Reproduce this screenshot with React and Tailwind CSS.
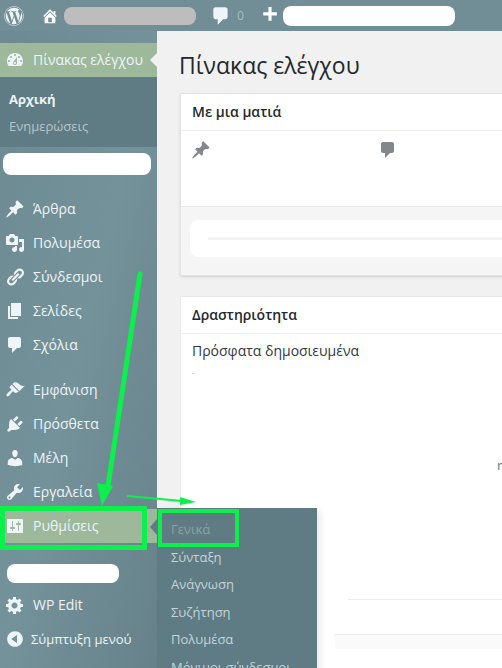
import { FaWordpress } from 'react-icons/fa';

const icons = {
  dashboard: 'M3.76 16h12.48c1.1-1.37 1.76-3.11 1.76-5 0-4.42-3.58-8-8-8s-8 3.58-8 8c0 1.89.66 3.63 1.76 5zM10 4c.55 0 1 .45 1 1s-.45 1-1 1-1-.45-1-1 .45-1 1-1zM6 6c.55 0 1 .45 1 1s-.45 1-1 1-1-.45-1-1 .45-1 1-1zm8 0c.55 0 1 .45 1 1s-.45 1-1 1-1-.45-1-1 .45-1 1-1zm-5.37 5.55L12 7v6c0 1.1-.9 2-2 2s-2-.9-2-2c0-.57.24-1.08.63-1.45zM4 10c.55 0 1 .45 1 1s-.45 1-1 1-1-.45-1-1 .45-1 1-1zm12 0c.55 0 1 .45 1 1s-.45 1-1 1-1-.45-1-1 .45-1 1-1zm-5 3c0-.55-.45-1-1-1s-1 .45-1 1 .45 1 1 1 1-.45 1-1z',
  post: 'M10.44 3.02l1.82-1.82 6.36 6.35-1.83 1.82c-1.05-.68-2.48-.57-3.41.36l-.75.75c-.92.93-1.04 2.35-.35 3.41l-1.83 1.82-2.41-2.41-2.8 2.79c-.42.42-3.38 2.71-3.8 2.29s1.86-3.39 2.28-3.81l2.79-2.79L4.1 9.36l1.83-1.82c1.05.69 2.48.57 3.4-.36l.75-.75c.93-.92 1.05-2.35.36-3.41z',
  media: 'M13 11V4c0-.55-.45-1-1-1h-1.67L9 1H5L3.67 3H2c-.55 0-1 .45-1 1v7c0 .55.45 1 1 1h10c.55 0 1-.45 1-1zM7 4.5c1.38 0 2.5 1.12 2.5 2.5S8.38 9.5 7 9.5 4.5 8.38 4.5 7 5.62 4.5 7 4.5zM14 6h5v10.5c0 1.38-1.12 2.5-2.5 2.5S14 17.88 14 16.5s1.12-2.5 2.5-2.5c.17 0 .34.02.5.05V9h-3V6zm-4 8.05V13h2v3.5c0 1.38-1.12 2.5-2.5 2.5S7 17.88 7 16.5 8.12 14 9.5 14c.17 0 .34.02.5.05z',
  links: 'M17.74 2.76c1.68 1.69 1.68 4.41 0 6.1l-1.53 1.52c-1.12 1.12-2.7 1.47-4.14 1.09l2.62-2.61.76-.77.76-.76c.84-.84.84-2.2 0-3.04-.84-.85-2.2-.85-3.04 0l-.77.76-3.38 3.38c-.37-1.44-.02-3.02 1.1-4.14l1.52-1.53c1.69-1.68 4.42-1.68 6.1 0zM8.59 13.43l5.34-5.34c.42-.42.42-1.1 0-1.52-.44-.43-1.13-.39-1.53 0l-5.33 5.34c-.42.42-.42 1.1 0 1.52.44.43 1.13.39 1.52 0zm-.76 2.29l4.14-4.15c.38 1.44.03 3.02-1.09 4.14l-1.52 1.53c-1.69 1.68-4.41 1.68-6.1 0-1.68-1.68-1.68-4.42 0-6.1l1.53-1.52c1.12-1.12 2.7-1.47 4.14-1.1l-4.14 4.15c-.85.84-.85 2.2 0 3.05.84.84 2.2.84 3.04 0z',
  page: 'M6 15V2h10v13H6zm-1 1h8v2H3V5h2v11z',
  comments: 'M5 2h9c1.1 0 2 .9 2 2v7c0 1.1-.9 2-2 2h-2l-5 5v-5H5c-1.1 0-2-.9-2-2V4c0-1.1.9-2 2-2z',
  appearance: 'M14.48 11.06L7.41 3.99l1.5-1.5c.5-.56 2.3-.47 3.51.32 1.21.8 1.43 1.28 2.91 2.1 1.18.64 2.45 1.26 4.45.85zM13.77 11.77L6.7 4.7 4.93 6.47c-.39.39-.39 1.02 0 1.41l1.06 1.06c.39.39.39 1.03 0 1.42-.6.6-1.43 1.11-2.21 1.69-.35.26-.7.53-1.01.84-1.03 1.03-1.77 2.63-1.17 3.23.6.6 2.2-.14 3.23-1.17.31-.31.58-.66.84-1.01.58-.78 1.09-1.61 1.69-2.21.39-.39 1.03-.39 1.42 0l1.06 1.06c.39.39 1.02.39 1.41 0z',
  plugins: 'M13.11 4.36L9.87 7.6 8 5.73l3.24-3.24c.35-.34 1.05-.2 1.56.32.52.51.66 1.21.31 1.55zm-8 1.77l.91-1.12 9.01 9.01-1.19.84c-.71.71-2.63 1.16-3.82 1.16H6.14L4.9 17.26c-.59.59-1.54.59-2.12 0-.59-.58-.59-1.53 0-2.12l1.24-1.24v-3.88c0-1.13.4-3.19 1.09-3.89zm7.26 3.97l3.24-3.24c.34-.35 1.04-.21 1.55.31.52.51.66 1.21.31 1.55l-3.24 3.25z',
  users: 'M10 9.25c-2.27 0-2.73-3.44-2.73-3.44C7 4.02 7.82 2 9.97 2c2.16 0 2.98 2.02 2.71 3.81 0 0-.41 3.44-2.68 3.44zm0 2.57L12.72 10c2.39 0 4.52 2.33 4.52 4.53v2.49s-3.65 1.13-7.24 1.13c-3.65 0-7.24-1.13-7.24-1.13v-2.49c0-2.25 1.94-4.48 4.47-4.48z',
  tools: 'M16.68 9.77c-1.34 1.34-3.3 1.67-4.95.99l-5.41 6.52c-.99.99-2.59.99-3.58 0s-.99-2.59 0-3.57l6.52-5.42c-.68-1.65-.35-3.61.99-4.95 1.28-1.28 3.12-1.62 4.72-1.06l-2.89 2.89 2.82 2.82 2.86-2.87c.53 1.58.18 3.39-1.08 4.65zM3.81 16.21c.4.39 1.04.39 1.43 0 .4-.4.4-1.04 0-1.43-.39-.4-1.03-.4-1.43 0-.39.39-.39 1.03 0 1.43z',
  settings: 'M18 16V4c0-.55-.45-1-1-1H3c-.55 0-1 .45-1 1v12c0 .55.45 1 1 1h14c.55 0 1-.45 1-1zM8 11h1c.55 0 1 .45 1 1s-.45 1-1 1H8v1.5c0 .28-.22.5-.5.5s-.5-.22-.5-.5V13H6c-.55 0-1-.45-1-1s.45-1 1-1h1V5.5c0-.28.22-.5.5-.5s.5.22.5.5V11zm5-2h-1c-.55 0-1-.45-1-1s.45-1 1-1h1V5.5c0-.28.22-.5.5-.5s.5.22.5.5V7h1c.55 0 1 .45 1 1s-.45 1-1 1h-1v5.5c0 .28-.22.5-.5.5s-.5-.22-.5-.5V9z',
  generic: 'M18 12h-2.18c-.17.7-.44 1.35-.81 1.93l1.54 1.54-2.1 2.1-1.54-1.54c-.58.36-1.23.63-1.91.79V19H8v-2.18c-.68-.16-1.33-.43-1.91-.79l-1.54 1.54-2.12-2.12 1.54-1.54c-.36-.58-.63-1.23-.79-1.91H1V9.03h2.17c.16-.7.44-1.35.8-1.94L2.43 5.55l2.1-2.1 1.54 1.54c.58-.37 1.24-.64 1.93-.81V2h3v2.18c.68.16 1.33.43 1.91.79l1.54-1.54 2.12 2.12-1.54 1.54c.36.59.64 1.24.8 1.94H18V12zm-8.5 1.5c1.66 0 3-1.34 3-3s-1.34-3-3-3-3 1.34-3 3 1.34 3 3 3z',
  collapse: 'M10 2.16c4.33 0 7.84 3.51 7.84 7.84s-3.51 7.84-7.84 7.84S2.16 14.33 2.16 10 5.71 2.16 10 2.16zm2 11.72V6.12L6.18 9.97z',
  home: 'M16 8.5l1.53 1.53-1.06 1.06L10 4.62l-6.47 6.47-1.06-1.06L10 2.5l4 4v-2h2v4zm-6-2.46l6 5.99V18H4v-5.97zM12 17v-5H8v5h4z',
  plus: 'M17 7v3h-5v5H9v-5H4V7h5V2h3v5h5z',
};

function Icon({ name, className }) {
  return (
    <svg viewBox="0 0 20 20" fill="currentColor" className={className}>
      <path d={icons[name]} />
    </svg>
  );
}

function MenuItem({ icon, label, active }) {
  return (
    <div className={`flex items-center h-[34px] pl-[5px] text-[14px] text-[#eef4f7] ${active ? 'bg-[#9db89b]' : ''}`}>
      <Icon name={icon} className="w-[20px] h-[20px] shrink-0" />
      <span className="ml-[8px] pb-[2px]">{label}</span>
    </div>
  );
}

function Sidebar() {
  return (
    <aside className="w-[157px] shrink-0 bg-gradient-to-br from-[#6d8a92] via-[#74929a] to-[#668189] pt-[12px]">
      <MenuItem icon="dashboard" label="Πίνακας ελέγχου" active />
      <div className="h-[70px] bg-[#5f7b84] pt-[9px] pl-[9px] text-[13px] leading-[27px]">
        <div className="font-bold text-[#eef4f7]">Αρχική</div>
        <div className="text-[#b6c6cb]">Ενημερώσεις</div>
      </div>
      <div className="h-[45px] pt-[6px] pl-[3px]">
        <div className="w-[148px] h-[22px] rounded-[8px] bg-white" />
      </div>
      <MenuItem icon="post" label="Άρθρα" />
      <MenuItem icon="media" label="Πολυμέσα" />
      <MenuItem icon="links" label="Σύνδεσμοι" />
      <MenuItem icon="page" label="Σελίδες" />
      <MenuItem icon="comments" label="Σχόλια" />
      <div className="h-[11px]" />
      <MenuItem icon="appearance" label="Εμφάνιση" />
      <MenuItem icon="plugins" label="Πρόσθετα" />
      <MenuItem icon="users" label="Μέλη" />
      <MenuItem icon="tools" label="Εργαλεία" />
      <MenuItem icon="settings" label="Ρυθμίσεις" active />
      <div className="h-[45px] pt-[21px] pl-[7px]">
        <div className="w-[112px] h-[19px] rounded-[8px] bg-white" />
      </div>
      <MenuItem icon="generic" label="WP Edit" />
      <div className="flex items-center h-[34px] pl-[5px] text-[13px] text-[#eef4f7]">
        <Icon name="collapse" className="w-[20px] h-[20px] shrink-0" />
        <span className="ml-[6px] pt-[2px]">Σύμπτυξη μενού</span>
      </div>
    </aside>
  );
}

function Dashboard() {
  return (
    <main className="flex-1 min-w-0 bg-[#f1f1f1] pl-[23px] overflow-hidden text-[#23282d]">
      <h1 className="h-[62px] pt-[16px] -ml-px text-[23px] leading-[36px] text-[#23282d]">Πίνακας ελέγχου</h1>

      <section className="w-[340px] h-[183px] bg-[#f5f5f5] border border-[#e4e4e4] shadow-sm">
        <h2 className="h-[37px] bg-white border-b border-[#eeeeee] pl-[11px] text-[14px] leading-[36px] font-semibold">Με μια ματιά</h2>
        <div className="h-[76px] bg-white border-b border-[#e8e8e8] flex pl-[10px] pt-[9px] text-[#82878c]">
          <Icon name="post" className="w-[20px] h-[20px]" />
          <Icon name="comments" className="w-[20px] h-[20px] ml-[167px]" />
        </div>
        <div className="ml-[9px] mt-[13px] h-[37px] rounded-l-[8px] bg-white pt-[17px] pl-[18px]">
          <div className="h-[3px] bg-[#f3f3f3]" />
        </div>
      </section>

      <section className="w-[340px] h-[400px] mt-[20px] bg-white border-t border-l border-[#e8e8e8]">
        <h2 className="h-[37px] border-b border-[#eeeeee] pl-[11px] text-[14px] leading-[35px] font-semibold">Δραστηριότητα</h2>
        <p className="pl-[11px] pt-[7px] text-[14px] leading-[19px] text-[#32373c]">Πρόσφατα δημοσιευμένα</p>
        <p className="pl-[11px] pt-[6px] text-[8px] leading-[12px] text-[#999999]">-</p>
        <p className="pl-[316px] pt-[78px] text-[13px] leading-[18px] text-[#3f7f9f]">r</p>
        <div className="ml-[167px] mt-[125px] h-px bg-[#eeeeee]" />
        <div className="ml-[154px] mt-[34px] h-[15px] bg-[#fafafa] border-t border-[#ececec]" />
      </section>
    </main>
  );
}

function Flyout() {
  return (
    <div className="absolute left-[157px] top-[508px] w-[160px] h-[170px] bg-[#5f7b84] shadow-[4px_2px_6px_rgba(0,0,0,0.08)] pl-[14px] pt-[8px] text-[13px] leading-[27.5px] text-[#c5d4d8]">
      <div className="text-[#8ba29f]">Γενικά</div>
      <div>Σύνταξη</div>
      <div>Ανάγνωση</div>
      <div>Συζήτηση</div>
      <div>Πολυμέσα</div>
      <div>Μόνιμοι σύνδεσμοι</div>
    </div>
  );
}

function Annotations() {
  return (
    <>
      <div className="absolute left-0 top-[506px] w-[147px] h-[44px] border-[5px] border-[#0cf04c]" />
      <div className="absolute left-[158px] top-[509px] w-[81px] h-[38px] border-4 border-[#0cf04c]" />
      <svg className="absolute inset-0 w-[502px] h-[668px] pointer-events-none" viewBox="0 0 502 668">
        <path d="M140 274 L108 486" stroke="#0cf04c" strokeWidth="5" strokeLinecap="round" fill="none" />
        <path d="M97 483 L113 486 L102 506 Z" fill="#0cf04c" />
        <path d="M127 496 L182 501" stroke="#0cf04c" strokeWidth="2" fill="none" />
        <path d="M180 497 L196 502 L180 505 Z" fill="#0cf04c" />
      </svg>
    </>
  );
}

export default function App() {
  return (
    <div className="relative w-[502px] h-[668px] overflow-hidden flex flex-col bg-[#f1f1f1] font-['Open_Sans',sans-serif]">
      <header className="h-[31px] shrink-0 flex items-center bg-[#718d96] text-white">
        <FaWordpress className="ml-[4px] w-[20px] h-[20px] text-[#eef4f7]" />
        <Icon name="home" className="ml-[17px] w-[18px] h-[18px]" />
        <div className="ml-[5px] w-[132px] h-[18px] rounded-[8px] bg-[#bdbdbd]" />
        <Icon name="comments" className="ml-[14px] w-[22px] h-[22px] text-[#eef4f7]" />
        <span className="ml-[5px] text-[12px] text-[#a9bcc2]">0</span>
        <Icon name="plus" className="ml-[15px] w-[21px] h-[21px]" />
        <div className="ml-[3px] w-[172px] h-[20px] rounded-[8px] bg-white" />
      </header>
      <div className="flex flex-1 min-h-0">
        <Sidebar />
        <Dashboard />
      </div>
      {/* menu pointers */}
      <div className="absolute left-[150px] top-[53px] w-0 h-0 border-y-[7px] border-y-transparent border-r-[7px] border-r-[#f1f1f1]" />
      <div className="absolute left-[150px] top-[519px] w-0 h-0 border-y-[8px] border-y-transparent border-r-[7px] border-r-[#5f7b84]" />
      <Flyout />
      <Annotations />
    </div>
  );
}
